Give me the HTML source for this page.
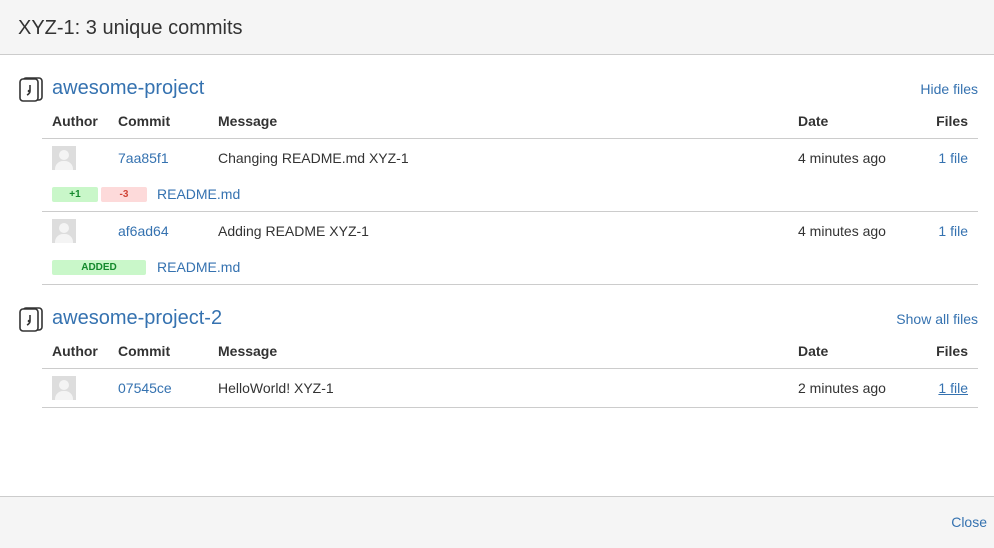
<!DOCTYPE html>
<html><head><style>
body{margin:0;width:994px;height:547px;position:relative;font-family:"Liberation Sans",Arial,sans-serif;background:#fff;overflow:hidden;color:#333}
.a{position:absolute;white-space:nowrap}
.hd{position:absolute;left:0;top:0;width:994px;height:54px;background:#f5f5f5;border-bottom:1px solid #ccc}
.ft{position:absolute;left:0;top:496px;width:994px;height:51px;background:#f5f5f5;border-top:1px solid #ccc}
.l{color:#3572b0}
.th{font-size:14px;font-weight:bold;color:#333}
.t{font-size:14px}
.ln{position:absolute;left:42px;width:936px;height:1px;background:#ccc}
.av{position:absolute;left:52px;width:24px;height:24px;background:#ddd;overflow:hidden}
.av:before{content:"";position:absolute;left:7px;top:4px;width:10px;height:10px;border-radius:50%;background:#f4f4f4}
.av:after{content:"";position:absolute;left:3px;top:15px;width:18px;height:14px;border-radius:8px 8px 0 0;background:#f4f4f4}
.b{position:absolute;height:15px;font-size:10px;font-weight:bold;text-align:center;line-height:15px;border-radius:2px}
.g{background:#c9f7c9;color:#14892c}.r{background:#fddada;color:#d04437}
.pt{font-size:20px;color:#3572b0}
</style></head><body>
<div class="hd"></div>
<div class="a" style="left:18px;top:17px;font-size:20px;color:#333">XYZ-1: 3 unique commits</div>

<svg class="a" style="left:19px;top:77px" width="24" height="25" viewBox="0 0 24 25"><rect x="4" y="1" width="19" height="22" rx="3" fill="none" stroke="#333" stroke-width="1.6"/><rect x="1" y="2" width="18" height="22" rx="3" fill="#fff" stroke="#333" stroke-width="1.6"/><path d="M11 8v6c0 2-1 3-3 4" fill="none" stroke="#333" stroke-width="1.6"/><circle cx="10" cy="14" r="1.3" fill="#333"/></svg>
<div class="a pt" style="left:52px;top:77px">awesome-project</div>
<div class="a t l" style="right:16px;top:81px">Hide files</div>
<div class="a th" style="left:52px;top:113px">Author</div>
<div class="a th" style="left:118px;top:113px">Commit</div>
<div class="a th" style="left:218px;top:113px">Message</div>
<div class="a th" style="left:798px;top:113px">Date</div>
<div class="a th" style="right:26px;top:113px">Files</div>
<div class="ln" style="top:138px"></div>
<div class="av" style="top:146px"></div>
<div class="a t l" style="left:118px;top:150px">7aa85f1</div>
<div class="a t" style="left:218px;top:150px">Changing README.md XYZ-1</div>
<div class="a t" style="left:798px;top:150px">4 minutes ago</div>
<div class="a t l" style="right:26px;top:150px">1 file</div>
<div class="b g" style="left:52px;top:187px;width:46px">+1</div>
<div class="b r" style="left:101px;top:187px;width:46px">-3</div>
<div class="a t l" style="left:157px;top:186px">README.md</div>
<div class="ln" style="top:211px"></div>
<div class="av" style="top:219px"></div>
<div class="a t l" style="left:118px;top:223px">af6ad64</div>
<div class="a t" style="left:218px;top:223px">Adding README XYZ-1</div>
<div class="a t" style="left:798px;top:223px">4 minutes ago</div>
<div class="a t l" style="right:26px;top:223px">1 file</div>
<div class="b g" style="left:52px;top:260px;width:94px">ADDED</div>
<div class="a t l" style="left:157px;top:259px">README.md</div>
<div class="ln" style="top:284px"></div>

<svg class="a" style="left:19px;top:307px" width="24" height="25" viewBox="0 0 24 25"><rect x="4" y="1" width="19" height="22" rx="3" fill="none" stroke="#333" stroke-width="1.6"/><rect x="1" y="2" width="18" height="22" rx="3" fill="#fff" stroke="#333" stroke-width="1.6"/><path d="M11 8v6c0 2-1 3-3 4" fill="none" stroke="#333" stroke-width="1.6"/><circle cx="10" cy="14" r="1.3" fill="#333"/></svg>
<div class="a pt" style="left:52px;top:307px">awesome-project-2</div>
<div class="a t l" style="right:16px;top:311px">Show all files</div>
<div class="a th" style="left:52px;top:343px">Author</div>
<div class="a th" style="left:118px;top:343px">Commit</div>
<div class="a th" style="left:218px;top:343px">Message</div>
<div class="a th" style="left:798px;top:343px">Date</div>
<div class="a th" style="right:26px;top:343px">Files</div>
<div class="ln" style="top:368px"></div>
<div class="av" style="top:376px"></div>
<div class="a t l" style="left:118px;top:380px">07545ce</div>
<div class="a t" style="left:218px;top:380px">HelloWorld! XYZ-1</div>
<div class="a t" style="left:798px;top:380px">2 minutes ago</div>
<div class="a t l" style="right:26px;top:380px;text-decoration:underline">1 file</div>
<div class="ln" style="top:407px"></div>

<div class="ft"></div>
<div class="a t l" style="right:7px;top:514px">Close</div>
</body></html>
